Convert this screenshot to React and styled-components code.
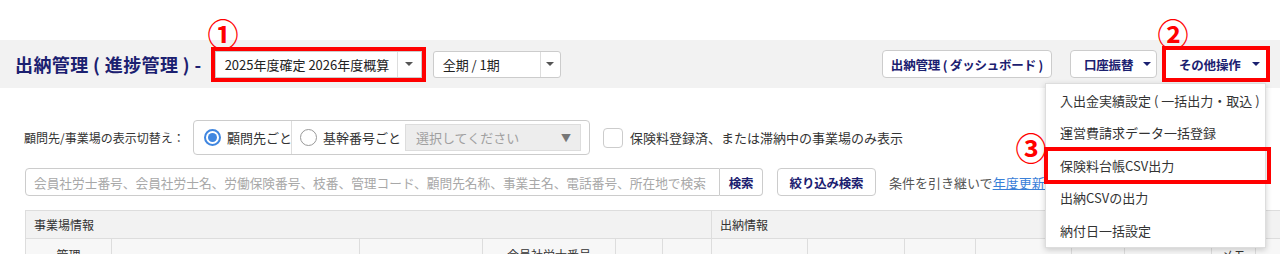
import React from "react";
import styled, { createGlobalStyle, css } from "styled-components";

const GlobalStyle = createGlobalStyle`
  body {
    margin: 0;
    background: #fff;
    font-family: "Noto Sans CJK JP", "Liberation Sans", sans-serif;
    color: #333;
    overflow: hidden;
  }
`;

const NAVY = "#1b2070";
const RED = "#ff0000";

const Page = styled.div`
  position: relative;
  width: 1280px;
  height: 254px;
  padding-top: 40px;
  box-sizing: border-box;
  overflow: hidden;
`;

const HeaderBar = styled.div`
  height: 48px;
  background: #f2f2f2;
  display: flex;
  align-items: center;
  padding: 0 14px 0 15px;
`;

const Title = styled.h1`
  margin: 0;
  font-size: 18px;
  font-weight: 700;
  color: ${NAVY};
  white-space: pre;
  letter-spacing: 0.4px;
`;

const SelectBox = styled.div`
  display: flex;
  align-items: stretch;
  height: 27px;
  width: ${(p) => p.$width}px;
  margin-left: ${(p) => p.$gap}px;
  background: #fff;
  border: 1px solid #ccc;
  border-radius: 3px;
  box-sizing: border-box;
  font-size: 13px;
  color: #222;
  ${(p) =>
    p.$marked &&
    css`
      outline: 4px solid ${RED};
      border-radius: 0;
    `}
`;

const SelectText = styled.span`
  flex: 1;
  display: flex;
  align-items: center;
  padding-left: 9px;
  white-space: nowrap;
`;

const CaretCell = styled.span`
  width: ${(p) => p.$w}px;
  border-left: 1px solid #ddd;
  display: flex;
  align-items: center;
  justify-content: center;
`;

const Caret = styled.i`
  display: inline-block;
  width: 0;
  height: 0;
  border-left: 4px solid transparent;
  border-right: 4px solid transparent;
  border-top: 4px solid ${(p) => p.$color || "#555"};
  margin-left: ${(p) => p.$ml || 0}px;
`;

const Spacer = styled.div`
  flex: 1;
`;

const Button = styled.button`
  position: relative;
  flex-shrink: 0;
  width: ${(p) => p.$w}px;
  height: 28px;
  padding: 0 0 0 ${(p) => p.$pl || 0}px;
  margin-left: ${(p) => p.$gap || 0}px;
  background: #fff;
  border: 1px solid #ccc;
  border-radius: 4px;
  font-family: inherit;
  font-size: 12.5px;
  font-weight: 700;
  letter-spacing: -0.2px;
  color: ${NAVY};
  display: flex;
  align-items: center;
  justify-content: ${(p) => (p.$pl ? "flex-start" : "center")};
  white-space: pre;
  box-sizing: border-box;
  ${(p) =>
    p.$marked &&
    css`
      outline: 4px solid ${RED};
      border-radius: 0;
      border-color: #fff;
    `}
`;

const Menu = styled.ul`
  position: absolute;
  top: 32px;
  right: -1px;
  width: 219px;
  margin: 0;
  padding: 0;
  list-style: none;
  background: #fff;
  border: 1px solid #ddd;
  box-shadow: 0 2px 6px rgba(0, 0, 0, 0.18);
  text-align: left;
  letter-spacing: 0;
  z-index: 5;
`;

const MenuItem = styled.li`
  height: 32.5px;
  display: flex;
  align-items: center;
  padding-left: 14px;
  font-size: 13px;
  font-weight: 400;
  color: #333;
  white-space: pre;
  ${(p) =>
    p.$marked &&
    css`
      outline: 4px solid ${RED};
      outline-offset: -2px;
      margin-right: -4px;
    `}
`;

const FilterRow = styled.div`
  display: flex;
  align-items: center;
  margin: 32px 0 0 24px;
  height: 35px;
`;

const FilterLabel = styled.span`
  font-size: 12px;
  color: #333;
  width: 169px;
  white-space: nowrap;
`;

const RadioGroup = styled.div`
  display: flex;
  align-items: center;
  height: 35px;
  width: 397px;
  border: 1px solid #ccc;
  border-radius: 4px;
  box-sizing: border-box;
`;

const RadioCell = styled.label`
  display: flex;
  align-items: center;
  flex-shrink: 0;
  height: 100%;
  width: ${(p) => p.$w}px;
  padding-left: ${(p) => p.$pl}px;
  box-sizing: border-box;
  border-right: ${(p) => (p.$divider ? "1px solid #ddd" : "none")};
  font-size: 13px;
  color: #333;
  white-space: nowrap;
  gap: 6px;
`;

const Radio = styled.span`
  width: 17px;
  height: 17px;
  flex-shrink: 0;
  border-radius: 50%;
  box-sizing: border-box;
  border: ${(p) => (p.$checked ? "2px solid #3f86e0" : "1px solid #999")};
  display: flex;
  align-items: center;
  justify-content: center;
  background: #fff;
  &::after {
    content: "";
    display: ${(p) => (p.$checked ? "block" : "none")};
    width: 9px;
    height: 9px;
    border-radius: 50%;
    background: #3f86e0;
  }
`;

const DisabledSelect = styled.div`
  width: 176px;
  flex-shrink: 0;
  height: 27px;
  background: #ededed;
  border: 1px solid #ddd;
  box-sizing: border-box;
  display: flex;
  align-items: center;
  justify-content: space-between;
  padding: 0 9px 0 10px;
  font-size: 13px;
  color: #a0a0a0;
  white-space: nowrap;
`;

const SmallArrow = styled.span`
  font-size: 10px;
  color: #777;
`;

const Checkbox = styled.span`
  width: 20px;
  height: 20px;
  margin-left: 13px;
  border: 1px solid #ccc;
  border-radius: 4px;
  box-sizing: border-box;
  background: #fff;
`;

const CheckText = styled.span`
  margin-left: 7px;
  font-size: 13px;
  color: #333;
  white-space: nowrap;
`;

const SearchRow = styled.div`
  display: flex;
  align-items: center;
  margin: 13px 0 0 25px;
  height: 28px;
`;

const SearchInput = styled.div`
  width: 695px;
  flex-shrink: 0;
  height: 28px;
  box-sizing: border-box;
  border: 1px solid #ccc;
  border-radius: 4px 0 0 4px;
  display: flex;
  align-items: center;
  padding-left: 8px;
  font-size: 12.7px;
  color: #a8a8a8;
  white-space: nowrap;
  overflow: hidden;
`;

const AttachedButton = styled(Button)`
  border-left: none;
  border-radius: 0 4px 4px 0;
`;

const NoteText = styled.span`
  margin-left: 13px;
  font-size: 13px;
  color: #555;
  white-space: nowrap;
`;

const Link = styled.a`
  color: #3a80d8;
  text-decoration: underline;
`;

const Table = styled.table`
  margin: 14px 0 0 25px;
  width: 1255px;
  border-collapse: collapse;
  table-layout: fixed;
  font-size: 12px;
  color: #333;
`;

const HeadCell = styled.th`
  height: 27px;
  background: #f2f2f2;
  border: 1px solid #ddd;
  font-weight: 400;
  text-align: left;
  padding: 0 8px;
  white-space: nowrap;
`;

const SubCell = styled.th`
  height: 30px;
  background: #f7f7f7;
  border: 1px solid #ddd;
  font-weight: 400;
  text-align: center;
  vertical-align: top;
  padding: 7px 0 0;
  white-space: nowrap;
  overflow: hidden;
`;

const Marker = styled.span`
  position: absolute;
  left: ${(p) => p.$cx - 18}px;
  top: ${(p) => p.$cy - 18}px;
  width: 36px;
  height: 36px;
  display: flex;
  align-items: center;
  justify-content: center;
  font-size: 31px;
  font-weight: 700;
  line-height: 1;
  color: ${RED};
  z-index: 10;
`;

const columns = [86, 248, 123, 133, 47, 49, 96, 97, 71, 96, 53, 87, 44, 25];
const subLabels = { 0: "管理", 3: "会員社労士番号", 12: "メモ" };

export default function App() {
  return (
    <Page>
      <GlobalStyle />
      <Marker $cx={223} $cy={32}>①</Marker>
      <Marker $cx={1173} $cy={32}>②</Marker>
      <Marker $cx={1031} $cy={146}>③</Marker>

      <HeaderBar>
        <Title>出納管理 ( 進捗管理 ) -</Title>
        <SelectBox $width={207} $gap={13} $marked>
          <SelectText>2025年度確定 2026年度概算</SelectText>
          <CaretCell $w={23}>
            <Caret />
          </CaretCell>
        </SelectBox>
        <SelectBox $width={128} $gap={11}>
          <SelectText>全期 / 1期</SelectText>
          <CaretCell $w={19}>
            <Caret />
          </CaretCell>
        </SelectBox>
        <Spacer />
        <Button $w={170}>出納管理 ( ダッシュボード )</Button>
        <Button $w={87} $gap={18} $pl={13}>
          口座振替
          <Caret $color={NAVY} $ml={10} />
        </Button>
        <Button $w={100} $gap={9} $pl={12} $marked>
          その他操作
          <Caret $color={NAVY} $ml={11} />
          <Menu>
            <MenuItem>入出金実績設定 ( 一括出力・取込 )</MenuItem>
            <MenuItem>運営費請求データ一括登録</MenuItem>
            <MenuItem $marked>保険料台帳CSV出力</MenuItem>
            <MenuItem>出納CSVの出力</MenuItem>
            <MenuItem>納付日一括設定</MenuItem>
          </Menu>
        </Button>
      </HeaderBar>

      <FilterRow>
        <FilterLabel>顧問先/事業場の表示切替え：</FilterLabel>
        <RadioGroup>
          <RadioCell $w={98} $pl={10} $divider>
            <Radio $checked />
            顧問先ごと
          </RadioCell>
          <RadioCell $w={113} $pl={8}>
            <Radio />
            基幹番号ごと
          </RadioCell>
          <DisabledSelect>
            選択してください
            <SmallArrow>▼</SmallArrow>
          </DisabledSelect>
        </RadioGroup>
        <Checkbox />
        <CheckText>保険料登録済、または滞納中の事業場のみ表示</CheckText>
      </FilterRow>

      <SearchRow>
        <SearchInput>
          会員社労士番号、会員社労士名、労働保険番号、枝番、管理コード、顧問先名称、事業主名、電話番号、所在地で検索
        </SearchInput>
        <AttachedButton $w={43}>検索</AttachedButton>
        <Button $w={99} $gap={14}>絞り込み検索</Button>
        <NoteText>
          条件を引き継いで<Link>年度更新(進捗管理)</Link>
        </NoteText>
      </SearchRow>

      <Table>
        <colgroup>
          {columns.map((w, i) => (
            <col key={i} style={{ width: w }} />
          ))}
        </colgroup>
        <thead>
          <tr>
            <HeadCell colSpan={6}>事業場情報</HeadCell>
            <HeadCell colSpan={8}>出納情報</HeadCell>
          </tr>
          <tr>
            {columns.map((w, i) => (
              <SubCell key={i}>{subLabels[i] || ""}</SubCell>
            ))}
          </tr>
        </thead>
      </Table>
    </Page>
  );
}
